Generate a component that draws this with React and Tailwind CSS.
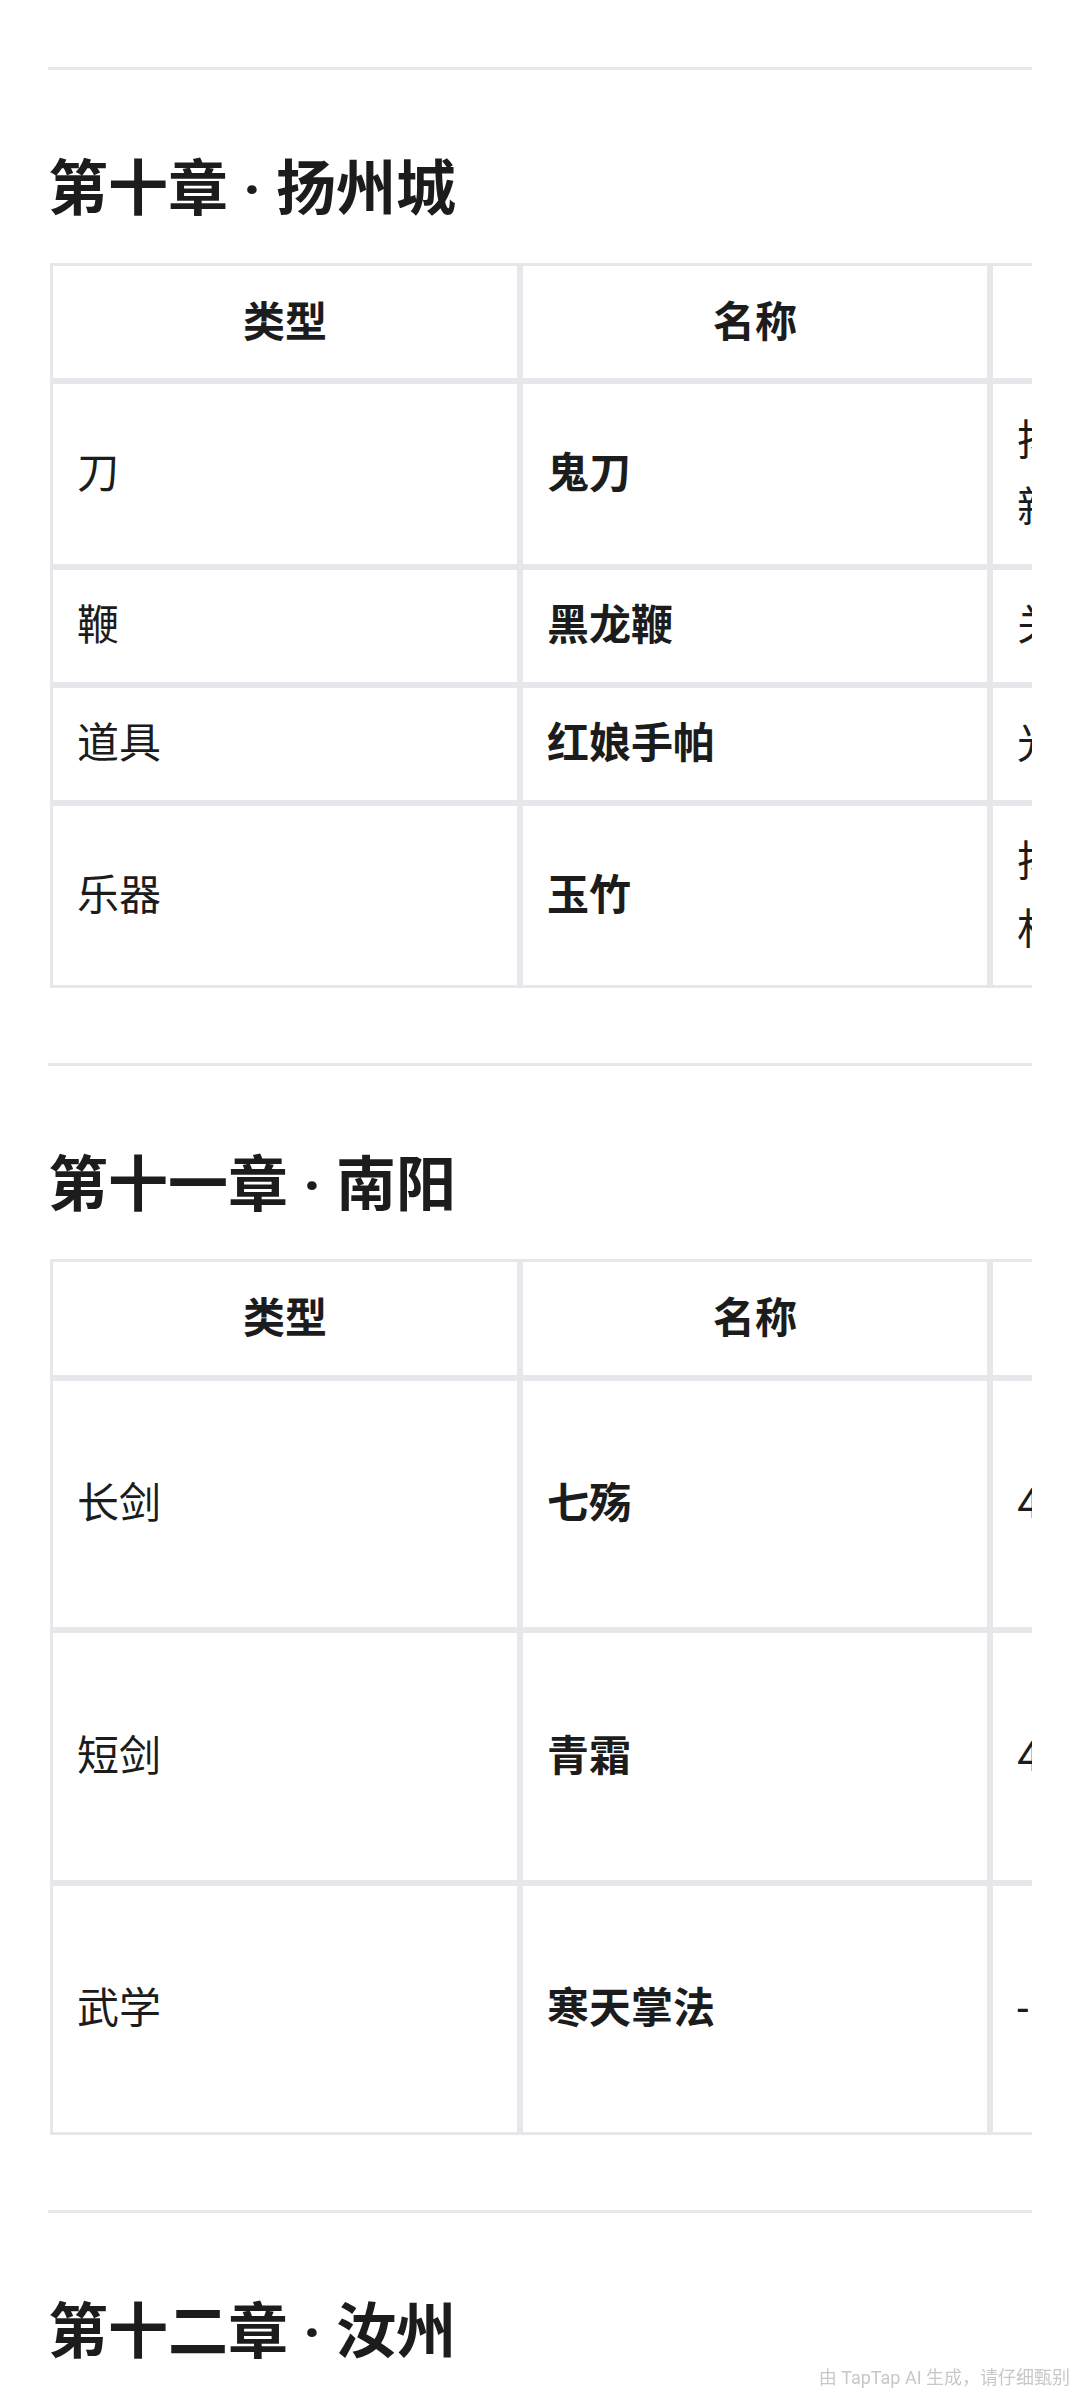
const FONT = { fontFamily: 'Roboto, "Noto Sans CJK SC", "Noto Sans", sans-serif' };

const HEAD = ['类型', '名称', '获取方式', '属性', '备注'];

// chapter data — columns past 名称 run off to the right and are only partly seen
const CHAPTERS = [
  {
    title: '第十章 · 扬州城',
    rows: [
      ['刀', '鬼刀', '扬州城外击败鬼刀客新手任务奖励', '攻击+45', '前期过渡武器'],
      ['鞭', '黑龙鞭', '关外黑龙帮首领掉落', '攻击+60', '可强化'],
      ['道具', '红娘手帕', '光明寺后院拾取', '-', '任务道具'],
      ['乐器', '玉竹', '扬州乐坊老板处购买村中乐师亦有', '-', '可演奏'],
    ],
  },
  {
    title: '第十一章 · 南阳',
    rows: [
      ['长剑', '七殇', '43', '攻击+120', '南阳城外七杀洞内宝箱中开出，需先完成支线任务'],
      ['短剑', '青霜', '42', '攻击+95', '南阳城铁匠铺处打造，需要寒铁三块与银两若干'],
      ['武学', '寒天掌法', '-', '内力+30', '拜入南阳寒天门后由掌门亲自传授，需内力达到三百'],
    ],
  },
];

function Cell({ children, head, bold }) {
  const Tag = head ? 'th' : 'td';
  return (
    <Tag
      className={`w-[470px] border-[3px] border-[#e5e7eb] px-6 py-[22.5px] text-[42px] leading-[1.6] text-[#1c1c1c] align-middle ${
        head ? 'text-center' : 'text-left'
      } ${head || bold ? 'font-bold' : 'font-normal'}`}
    >
      {children}
    </Tag>
  );
}

function Chapter({ title, rows }) {
  return (
    <section className="pb-[75px]">
      <div className="h-[3px] bg-[#e5e7eb]" />
      <h2 className="mt-[78px] mb-[31px] text-[60px] leading-[84px] font-bold text-[#1c1c1c]">{title}</h2>
      <div className="overflow-x-auto [scrollbar-width:none] pl-[2px]">
        <table className="table-fixed w-[2350px] border-separate border-spacing-0">
          <thead>
            <tr>
              {HEAD.map(h => (
                <Cell key={h} head>{h}</Cell>
              ))}
            </tr>
          </thead>
          <tbody>
            {rows.map(r => (
              <tr key={r[1]}>
                {r.map((v, i) => (
                  <Cell key={i} bold={i === 1}>{v}</Cell>
                ))}
              </tr>
            ))}
          </tbody>
        </table>
      </div>
    </section>
  );
}

export default function App() {
  return (
    <div className="bg-white min-h-screen px-12 pt-[67px]" style={FONT}>
      {CHAPTERS.map(c => (
        <Chapter key={c.title} {...c} />
      ))}

      <div className="h-[3px] bg-[#e5e7eb]" />
      <h2 className="mt-[78px] text-[60px] leading-[84px] font-bold text-[#1c1c1c]">第十二章 · 汝州</h2>

      {/* AI watermark */}
      <div className="fixed right-[10px] bottom-[9px] text-[18px] leading-none text-[#c8c8c8]">
        由 TapTap AI 生成，请仔细甄别
      </div>
    </div>
  );
}
